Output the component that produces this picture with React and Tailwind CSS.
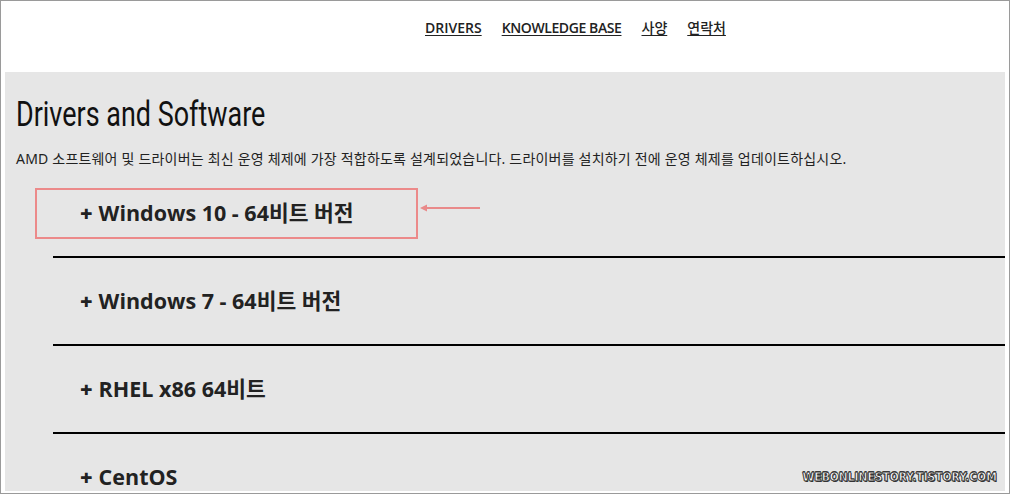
const items = ['Windows 10 - 64비트 버전', 'Windows 7 - 64비트 버전', 'RHEL x86 64비트', 'CentOS'];

export default function App() {
  return (
    <div className="relative w-[1010px] h-[494px] overflow-hidden border border-[#9a9a9a] bg-white flex flex-col">
      <header className="h-[71px] shrink-0 flex items-start pt-[16px] pl-[424px] gap-[20px] text-[14px] font-semibold text-[#222]" style={{ fontFamily: '"Open Sans", "Noto Sans CJK KR", sans-serif' }}>
        <a href="#" className="underline underline-offset-2">DRIVERS</a>
        <a href="#" className="underline underline-offset-2 tracking-[-0.4px]">KNOWLEDGE BASE</a>
        <a href="#" className="underline underline-offset-2 font-medium">사양</a>
        <a href="#" className="underline underline-offset-2 font-medium">연락처</a>
      </header>

      <main className="relative flex-1 mx-[4px] mb-[2px] bg-[#e6e6e6] overflow-hidden">
        <h1 className="mt-[22px] ml-[11px] inline-block origin-left scale-x-[0.77] text-[35px] leading-[42px] font-normal text-[#111] whitespace-nowrap" style={{ fontFamily: 'Roboto, sans-serif' }}>
          Drivers and Software
        </h1>
        <p className="mt-[14px] ml-[11px] text-[14px] leading-[18px] tracking-[0.2px] text-[#222] whitespace-nowrap" style={{ fontFamily: '"Noto Sans", "Noto Sans CJK KR", sans-serif' }}>
          AMD 소프트웨어 및 드라이버는 최신 운영 체제에 가장 적합하도록 설계되었습니다. 드라이버를 설치하기 전에 운영 체제를 업데이트하십시오.
        </p>

        <ul className="ml-[48px] mt-[2px]" style={{ fontFamily: '"Open Sans", "Noto Sans CJK KR", sans-serif' }}>
          {items.map((t) => (
            <li key={t} className="h-[88px] flex items-center pl-[27px] border-b-2 border-black text-[21.5px] font-bold text-[#222]">
              <span className="mr-[6px] font-extrabold">+</span>{t}
            </li>
          ))}
        </ul>

        <div className="absolute left-[30px] top-[116px] w-[383px] h-[51px] border-2 border-[#ec8a8a]" />
        <svg className="absolute left-[413px] top-[130px]" width="64" height="12" viewBox="0 0 64 12">
          <line x1="8" y1="6" x2="62" y2="6" stroke="#e98a8a" strokeWidth="2" />
          <polygon points="2,6 9,2.5 9,9.5" fill="#e98a8a" />
        </svg>

        <div className="absolute right-[8px] bottom-[5px] origin-right scale-x-[0.82] text-[13px] font-bold text-white whitespace-nowrap" style={{ fontFamily: '"DejaVu Sans", sans-serif', WebkitTextStroke: '0.8px #333', textShadow: '1px 1px 0 #333, -1px 0 0 #444, 0 -1px 0 #444' }}>
          WEBONLINESTORY.TISTORY.COM
        </div>
      </main>
    </div>
  );
}
